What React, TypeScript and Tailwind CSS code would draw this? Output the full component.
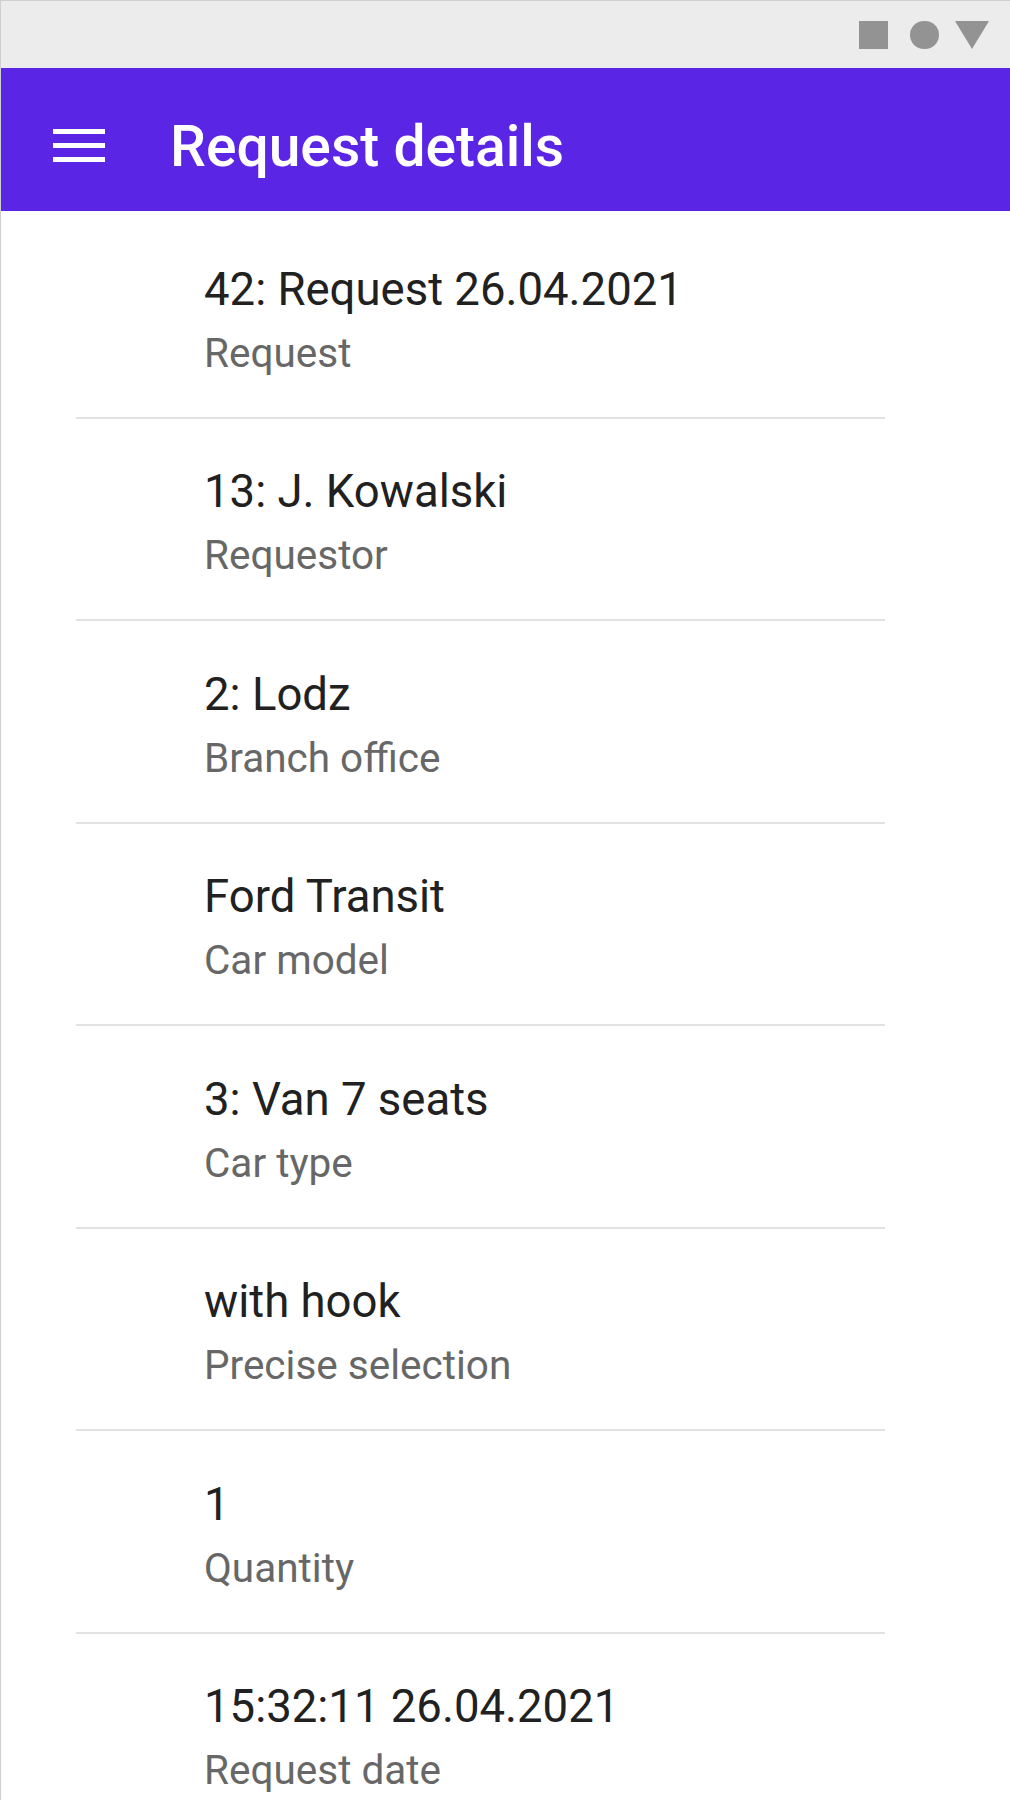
const rows = [
  { value: '42: Request 26.04.2021', label: 'Request' },
  { value: '13: J. Kowalski', label: 'Requestor' },
  { value: '2: Lodz', label: 'Branch office' },
  { value: 'Ford Transit', label: 'Car model' },
  { value: '3: Van 7 seats', label: 'Car type' },
  { value: 'with hook', label: 'Precise selection' },
  { value: '1', label: 'Quantity' },
  { value: '15:32:11 26.04.2021', label: 'Request date' },
];

export default function App() {
  return (
    <div className="w-[1010px] h-[1800px] overflow-hidden bg-white border-l border-t border-[#cfcfcf] font-['Roboto',sans-serif]">
      {/* Status bar */}
      <div className="h-[67px] bg-[#ececec] flex items-center justify-end pr-[21px]">
        <div className="w-[29px] h-[28px] bg-[#939393]" />
        <div className="ml-[22px] w-[29px] h-[28px] rounded-full bg-[#939393]" />
        <svg className="ml-[16px]" width="34" height="28" viewBox="0 0 34 28">
          <polygon points="0,0 34,0 17,28" fill="#939393" />
        </svg>
      </div>

      {/* App bar */}
      <div className="h-[143px] bg-[#5a25e4] flex items-start">
        <div className="mt-[61px] ml-[52px] w-[52px] flex flex-col gap-[9px]">
          <div className="h-[5px] bg-white" />
          <div className="h-[5px] bg-white" />
          <div className="h-[5px] bg-white" />
        </div>
        <h1 className="mt-[50px] ml-[65px] text-[57px] font-medium text-white leading-none">Request details</h1>
      </div>

      {/* Details list */}
      <div className="ml-[75px] w-[809px] pt-[5px]">
        {rows.map((r) => (
          <div key={r.label} className="pl-[128px] pt-[45.5px] pb-[40px] border-b-2 border-[#e2e2e2]">
            <div className="text-[45.5px] leading-[56px] text-[#212121]">{r.value}</div>
            <div className="mt-[11px] text-[40.5px] leading-[48px] text-[#676767]">{r.label}</div>
          </div>
        ))}
      </div>
    </div>
  );
}
